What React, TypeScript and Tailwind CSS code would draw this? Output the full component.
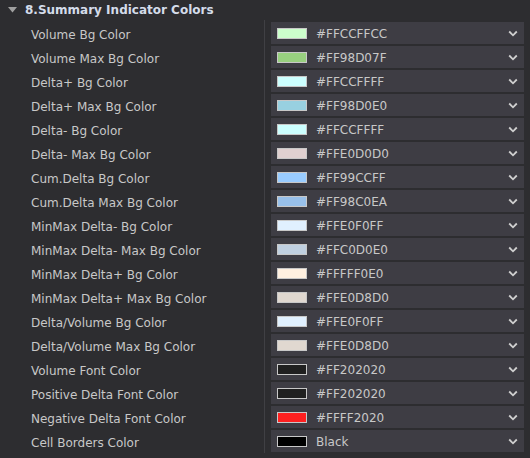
import React from "react";

const rows: [string, string, string][] = [
  ["Volume Bg Color", "#CCFFCC", "#FFCCFFCC"],
  ["Volume Max Bg Color", "#98D07F", "#FF98D07F"],
  ["Delta+ Bg Color", "#CCFFFF", "#FFCCFFFF"],
  ["Delta+ Max Bg Color", "#98D0E0", "#FF98D0E0"],
  ["Delta- Bg Color", "#CCFFFF", "#FFCCFFFF"],
  ["Delta- Max Bg Color", "#E0D0D0", "#FFE0D0D0"],
  ["Cum.Delta Bg Color", "#99CCFF", "#FF99CCFF"],
  ["Cum.Delta Max Bg Color", "#98C0EA", "#FF98C0EA"],
  ["MinMax Delta- Bg Color", "#E0F0FF", "#FFE0F0FF"],
  ["MinMax Delta- Max Bg Color", "#C0D0E0", "#FFC0D0E0"],
  ["MinMax Delta+ Bg Color", "#FFF0E0", "#FFFFF0E0"],
  ["MinMax Delta+ Max Bg Color", "#E0D8D0", "#FFE0D8D0"],
  ["Delta/Volume Bg Color", "#E0F0FF", "#FFE0F0FF"],
  ["Delta/Volume Max Bg Color", "#E0D8D0", "#FFE0D8D0"],
  ["Volume Font Color", "#202020", "#FF202020"],
  ["Positive Delta Font Color", "#202020", "#FF202020"],
  ["Negative Delta Font Color", "#FF2020", "#FFFF2020"],
  ["Cell Borders Color", "#000000", "Black"],
];

function Chevron() {
  return (
    <svg width="10" height="7" viewBox="0 0 10 7" className="shrink-0">
      <path d="M1.2 1.5 L5 5.3 L8.8 1.5" fill="none" stroke="#cfcfcf" strokeWidth="1.8" />
    </svg>
  );
}

export default function App() {
  return (
    <div
      className="w-[530px] h-[458px] bg-[#2d2d30] text-[#c8c8c8] overflow-hidden"
      style={{ fontFamily: '"DejaVu Sans", sans-serif' }}
    >
      <div className="h-[20px] flex items-center pl-[8px]">
        <svg width="9" height="6" viewBox="0 0 9 6" className="mr-[8px]">
          <path d="M0 0 L9 0 L4.5 5.5 Z" fill="#a0a0a0" />
        </svg>
        <span className="text-[12px] font-bold text-[#d4dcea]">8.Summary Indicator Colors</span>
      </div>
      <div className="flex">
        <div className="w-[264px] flex flex-col pt-[2px]">
          {rows.map((r) => (
            <div key={r[0]} className="h-[24px] flex items-center pl-[31px] text-[12px] pt-px">
              {r[0]}
            </div>
          ))}
        </div>
        <div className="w-px bg-[#404044] h-[433px]" />
        <div className="flex flex-col gap-[2px] pl-[6px] pt-[2px]">
          {rows.map((r) => (
            <div
              key={r[0]}
              className="w-[253px] h-[22px] bg-[#3e3d44] flex items-center pl-[6px] pr-[6px]"
            >
              <div
                className="w-[30px] h-[11px] border border-[#c8c8c8] shrink-0"
                style={{ backgroundColor: r[1] }}
              />
              <span className="ml-[9px] text-[12px] flex-1 pt-px">{r[2]}</span>
              <Chevron />
            </div>
          ))}
        </div>
      </div>
    </div>
  );
}
